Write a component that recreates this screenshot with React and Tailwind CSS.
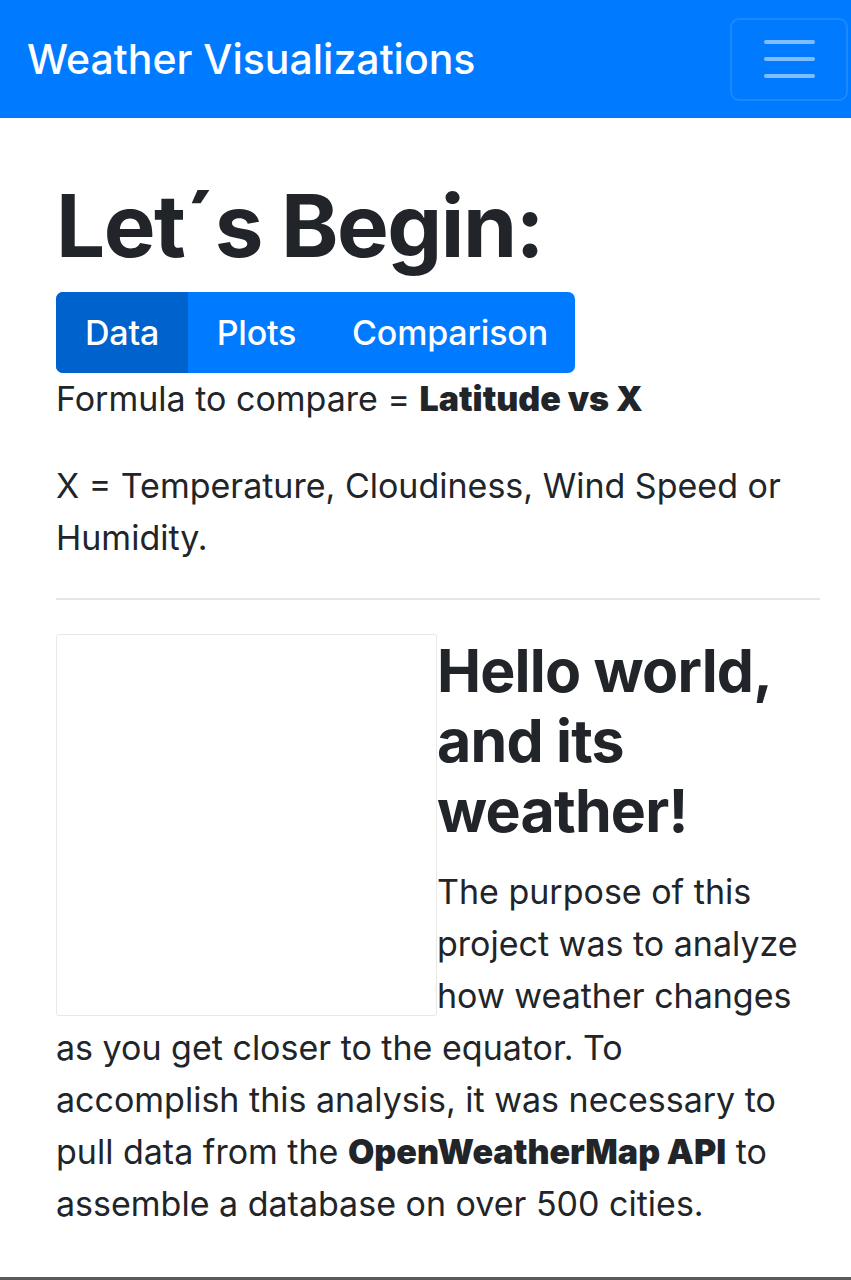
export default function App() {
  return (
    <div className="relative h-[1280px] overflow-hidden bg-white text-[#212529] font-['Inter','Liberation_Sans',sans-serif]">
      <nav className="h-[118px] bg-[#007bff] flex items-center justify-between pl-[27px] pr-[3px]">
        <span className="text-white text-[41px] font-medium leading-none tracking-[0px]">Weather Visualizations</span>
        <button className="w-[118px] h-[83px] border-2 border-white/10 rounded-[9px] flex flex-col items-center justify-center gap-[13px]">
          <span className="block w-[51px] h-[4px] rounded-full bg-white/50"></span>
          <span className="block w-[51px] h-[4px] rounded-full bg-white/50"></span>
          <span className="block w-[51px] h-[4px] rounded-full bg-white/50"></span>
        </button>
      </nav>

      <main className="pl-[56px] pr-[31px]">
        <h1 className="mt-[56px] mb-[15px] text-[87px] leading-[103px] font-bold tracking-[-1.5px]">Let´s Begin:</h1>

        <div className="inline-flex h-[81px] rounded-[7px] bg-[#007bff] overflow-hidden text-white text-[34px] font-medium tracking-[-0.2px]">
          <span className="w-[132px] flex items-center justify-center bg-[#0062cc]">Data</span>
          <span className="w-[137px] flex items-center justify-center">Plots</span>
          <span className="w-[250px] flex items-center justify-center">Comparison</span>
        </div>

        <p className="text-[34px] leading-[52px] mb-[35px]">
          Formula to compare = <b className="font-black">Latitude vs X</b>
        </p>
        <p className="text-[34px] leading-[52px]">X = Temperature, Cloudiness, Wind Speed or Humidity.</p>

        <hr className="mt-[34px] mb-[34px] border-t-2 border-[#e5e5e5]" />

        <div className="pr-[12px]">
          <div className="float-left w-[381px] h-[382px] border border-[#e8e8e8] rounded-[3px] bg-white"></div>
          <h2 className="pt-[2px] mb-[20px] text-[59px] leading-[70px] font-bold tracking-[-0.8px]">Hello world, and its weather!</h2>
          <p className="text-[34px] leading-[52px]">
            The purpose of this project was to analyze how weather changes as you get closer to the equator. To accomplish this analysis, it was necessary to pull data from the <b className="font-black">OpenWeatherMap API</b> to assemble a database on over 500 cities.
          </p>
        </div>
      </main>

      <div className="absolute left-0 right-0 top-[1277px] h-[3px] bg-[#5a5a5a]"></div>
    </div>
  )
}
